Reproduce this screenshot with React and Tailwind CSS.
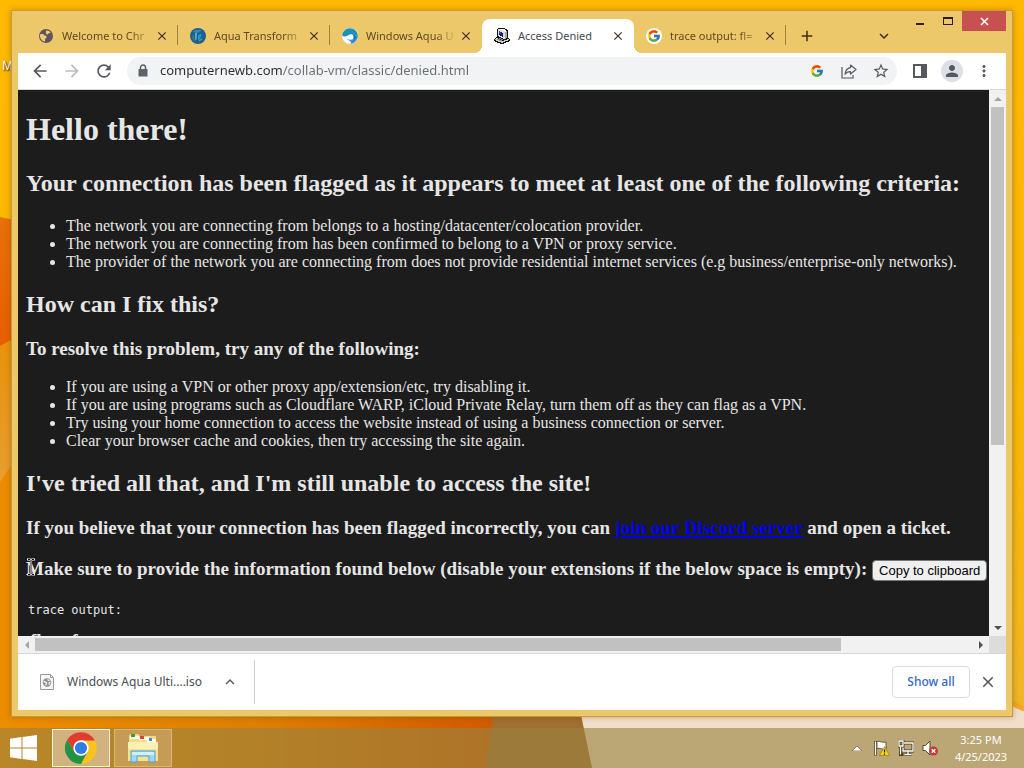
import {
  MdArrowBack,
  MdArrowForward,
  MdRefresh,
  MdStarBorder,
  MdPerson,
  MdMoreVert,
  MdClose,
  MdAdd,
  MdExpandMore,
  MdExpandLess,
} from "react-icons/md";
import { FcGoogle } from "react-icons/fc";

const CRITERIA = [
  "The network you are connecting from belongs to a hosting/datacenter/colocation provider.",
  "The network you are connecting from has been confirmed to belong to a VPN or proxy service.",
  "The provider of the network you are connecting from does not provide residential internet services (e.g business/enterprise-only networks).",
];

const FIXES = [
  "If you are using a VPN or other proxy app/extension/etc, try disabling it.",
  "If you are using programs such as Cloudflare WARP, iCloud Private Relay, turn them off as they can flag as a VPN.",
  "Try using your home connection to access the website instead of using a business connection or server.",
  "Clear your browser cache and cookies, then try accessing the site again.",
];

const TABS = [
  { title: "Welcome to Chr", Icon: GlobeIcon },
  { title: "Aqua Transform", Icon: AquaIcon },
  { title: "Windows Aqua U", Icon: WaveIcon },
  { title: "Access Denied", Icon: ComputerIcon, active: true },
  { title: "trace output: fl=", Icon: GoogleTabIcon },
];

function GlobeIcon() {
  return (
    <svg viewBox="0 0 16 16" className="size-4">
      <circle cx="8" cy="8" r="7" fill="#5f5560" />
      <path d="M2 6.500c2-.8 3.600-.5 4.500 1 1.500 0 2.500.8 2 2-.5 1-1.500 1-1.500 2.200 0 .9.400 1.500-.3 1.800C3.800 13 1.600 10 2 6.500z" fill="#f0cb76" />
      <path d="M8.300 2.500c1.700-.2 3.300.6 4.300 2-.8.800-1.700.3-2.300 1.200-.4.800-1.500 1-2 .3-.5-.9-.6-2.600 0-3.500z" fill="#f0cb76" />
    </svg>
  );
}

function AquaIcon() {
  return (
    <svg viewBox="0 0 16 16" className="size-4">
      <circle cx="8" cy="8" r="8" fill="#1c5f93" />
      <path d="M3 4c2-2.500 6-3 9-1.500-2 .5-3 1-4 2.500z" fill="#3b86b4" />
      <path d="M5 5l2-.5L6.500 12l-1.500-.5z" fill="#57b3b4" />
      <path d="M8 7.500l3-2 .5 1.500-1.500 4-2 1.500z" fill="#2796d6" />
      <path d="M3 6l1.500 5L6 14C3 13 1.500 9.500 3 6z" fill="#3b7f73" />
      <path d="M9 13l3-2" stroke="#8fb75a" strokeWidth="1" />
    </svg>
  );
}

function WaveIcon() {
  return (
    <svg viewBox="0 0 16 16" className="size-4">
      <circle cx="8" cy="8" r="8" fill="#f7fbfd" />
      <path d="M.2 7C.8 3 4 .2 8 .2c4.300 0 7.800 3.500 7.800 7.800 0 1-.2 2-.6 2.800-.7-2.600-2.500-4.600-5.400-4.600C6.500 6.200 5 8.600 2.600 8.600 1.500 8.600.6 8 .2 7z" fill="#1693b8" />
      <path d="M5 10.500c1.500 1.600 4.500 1.700 6.500.6 1-.6 2.700-.7 3.700-.3-1.200 3-3.900 5-7.200 5 1.500-.5 1.500-1.500.5-2.500S5.200 12 5 10.500z" fill="#2f8be6" />
      <path d="M9.800 6.200c2.900 0 4.700 2 5.400 4.600-1.800-.6-2.400.6-4.200.3 1-1.500.7-3.700-1.200-4.900z" fill="#1f6fae" />
    </svg>
  );
}

function ComputerIcon() {
  return (
    <svg viewBox="0 0 16 16" className="size-4" shapeRendering="crispEdges">
      <path d="M4 0h6l4 2v8l2 1v2l-7 3H7l-7-3v-2l3-2V1z" fill="#151515" />
      <path d="M4 1h1l6 3v7h-1L4 8z" fill="#dcdcdc" />
      <path d="M5 1h5l3 2-2 1z" fill="#f4f4f4" />
      <path d="M11 4l2-1v7l-2 1z" fill="#a5a5a5" />
      <path d="M5 3l4 2v4L5 7z" fill="#14147a" />
      <path d="M5 3l2 1v2L5 5z" fill="#3d4fc4" />
      <path d="M1 11l2-1 6 3 5-2 1 1-7 3-7-3z" fill="#d2d2d2" />
      <path d="M3 11l5 2M5 10l4 2" stroke="#8a8a8a" fill="none" />
    </svg>
  );
}

function GoogleTabIcon() {
  return (
    <span className="flex size-4 items-center justify-center rounded-full bg-white">
      <FcGoogle className="size-3.5" />
    </span>
  );
}

function Tab({ title, Icon, active }) {
  return (
    <div
      className={
        active
          ? "flex h-[34px] w-[152px] items-center rounded-t-lg bg-white pr-2 pl-3 text-[#45494d]"
          : "flex h-[34px] w-[152px] items-center pr-2 pl-3 text-[#5e4a22]"
      }
    >
      <Icon />
      <span
        className={
          active
            ? "ml-2 flex-1 text-[11px] whitespace-nowrap"
            : "ml-2 flex-1 text-[11px] whitespace-nowrap [mask-image:linear-gradient(to_right,black_75%,transparent)]"
        }
      >
        {title}
      </span>
      <button type="button" aria-label={"Close " + title} className="flex size-4 items-center justify-center">
        <MdClose className="size-3.5 text-[#3c2c16]" />
      </button>
    </div>
  );
}

function TabStrip() {
  return (
    <div className="flex h-[42px] items-end">
      <div className="flex pl-2">
        {TABS.map((tab, i) => (
          <div key={tab.title} className="relative">
            <Tab {...tab} />
            {i !== 2 && i !== 3 && <span className="absolute top-1.5 right-0 h-5 w-px bg-[#a3823f]" />}
            {tab.active && (
              <>
                <span className="absolute bottom-0 -left-2 size-2 bg-[radial-gradient(circle_at_0_0,transparent_8px,white_8px)]" />
                <span className="absolute -right-2 bottom-0 size-2 bg-[radial-gradient(circle_at_100%_0,transparent_8px,white_8px)]" />
              </>
            )}
          </div>
        ))}
      </div>
      <button type="button" aria-label="New tab" className="flex h-[34px] w-[42px] items-center justify-center">
        <MdAdd className="size-[18px] text-[#3c2c16]" />
      </button>
      <button type="button" aria-label="Search tabs" className="ml-auto flex h-[34px] w-7 items-center justify-center">
        <MdExpandMore className="size-[18px] text-[#3c2c16]" />
      </button>
      <div className="ml-2 flex h-5 self-start">
        <button type="button" aria-label="Minimize" className="flex w-7 items-center justify-center">
          <span className="mt-1.5 h-0.5 w-2 bg-[#2b1c0c]" />
        </button>
        <button type="button" aria-label="Maximize" className="flex w-7 items-center justify-center">
          <span className="h-2 w-2.5 border border-t-2 border-[#2b1c0c]" />
        </button>
        <button type="button" aria-label="Close" className="flex w-11 items-center justify-center bg-[#c75050]">
          <svg viewBox="0 0 9 9" className="size-[9px]">
            <path d="M1 1l7 7M8 1L1 8" stroke="white" strokeWidth="1.600" />
          </svg>
        </button>
      </div>
    </div>
  );
}

function IconButton({ label, children }) {
  return (
    <button type="button" aria-label={label} className="flex h-7 w-8 shrink-0 items-center justify-center text-[#55585c]">
      {children}
    </button>
  );
}

function Toolbar() {
  return (
    <div className="flex h-[37px] items-center border-b border-[#d5d7da] bg-white px-1.5">
      <IconButton label="Back">
        <MdArrowBack className="size-5" />
      </IconButton>
      <IconButton label="Forward">
        <MdArrowForward className="size-5 text-[#bbbdbf]" />
      </IconButton>
      <IconButton label="Reload">
        <MdRefresh className="size-5" />
      </IconButton>
      <div className="mx-[7px] flex h-7 flex-1 items-center rounded-full bg-[#f1f3f4] pl-2.5">
        <label htmlFor="address" aria-label="Address" className="shrink-0">
          <svg viewBox="0 0 12 14" className="h-3.5 w-3 text-[#5f6368]">
            <path d="M1.500 5h9v7.500h-9z" fill="currentColor" />
            <path d="M3.500 6V3.500a2.500 2.500 0 0 1 5 0V6" fill="none" stroke="currentColor" strokeWidth="1.500" />
          </svg>
        </label>
        <input
          id="address"
          type="text"
          defaultValue="computernewb.com/collab-vm/classic/denied.html"
          className="ml-[11px] min-w-0 flex-1 bg-[linear-gradient(to_right,#2a2d31_123px,#6b6f74_123px)] bg-clip-text text-[13px] text-transparent outline-none"
        />
        <IconButton label="Search with Google">
          <FcGoogle className="size-3.5" />
        </IconButton>
        <IconButton label="Share">
          <svg viewBox="0 0 16 16" className="size-4" fill="none" stroke="currentColor" strokeWidth="1.200">
            <path d="M1 4v11h11v-3" />
            <path d="M9.500 2l5.500 4.500-5.500 4.500V8.600c-2.500 0-4.300.8-5.500 2.600.3-3.200 2-6 5.500-6.600z" strokeLinejoin="round" />
          </svg>
        </IconButton>
        <IconButton label="Bookmark">
          <MdStarBorder className="size-[18px]" />
        </IconButton>
      </div>
      <IconButton label="Side panel">
        <svg viewBox="0 0 14 14" className="size-3.5">
          <path d="M0 0h14v14H0zM2 2v10h6V2z" fill="currentColor" fillRule="evenodd" />
        </svg>
      </IconButton>
      <IconButton label="Profile">
        <span className="flex size-[22px] items-center justify-center rounded-full bg-[#dcdfe5]">
          <MdPerson className="size-[18px]" />
        </span>
      </IconButton>
      <IconButton label="Menu">
        <MdMoreVert className="size-[18px]" />
      </IconButton>
    </div>
  );
}

function ScrollArrow({ d, className }) {
  return (
    <span className="flex size-[17px] shrink-0 items-center justify-center">
      <svg viewBox="0 0 8 8" className={"size-2 " + className}>
        <path d={d} fill="currentColor" />
      </svg>
    </span>
  );
}

function Page() {
  return (
    <div className="min-w-0 flex-1 overflow-hidden bg-[#1c1c1c] px-2 font-['Liberation_Serif',serif] text-base leading-[18px] whitespace-nowrap text-[#e6e6e6]">
      <h1 className="mt-[21px] text-[32px] leading-[37px] font-bold">Hello there!</h1>
      <h2 className="mt-[22px] text-2xl leading-[27px] font-bold">
        Your connection has been flagged as it appears to meet at least one of the following criteria:
      </h2>
      <ul className="mt-5 list-disc pl-10">
        {CRITERIA.map((text) => (
          <li key={text}>{text}</li>
        ))}
      </ul>
      <h2 className="mt-5 text-2xl leading-[27px] font-bold">How can I fix this?</h2>
      <h3 className="mt-5 text-[19px] leading-[21px] font-bold">To resolve this problem, try any of the following:</h3>
      <ul className="mt-[19px] list-disc pl-10">
        {FIXES.map((text) => (
          <li key={text}>{text}</li>
        ))}
      </ul>
      <h2 className="mt-5 text-2xl leading-[27px] font-bold">I've tried all that, and I'm still unable to access the site!</h2>
      <h3 className="mt-5 text-[19px] leading-[21px] font-bold">
        If you believe that your connection has been flagged incorrectly, you can{" "}
        <a href="#discord" className="text-[#0000ee] underline decoration-2 underline-offset-2">
          join our Discord server
        </a>{" "}
        and open a ticket.
      </h3>
      <h3 className="relative mt-5 text-[19px] leading-[21px] font-bold">
        Make sure to provide the information found below (disable your extensions if the below space is empty):{" "}
        <button
          type="button"
          className="h-[21px] rounded-sm border border-[#767676] bg-[#efefef] px-1.5 align-middle font-['Liberation_Sans',sans-serif] text-[13px] leading-[18px] font-normal text-black"
        >
          Copy to clipboard
        </button>
        <svg viewBox="0 0 8 18" className="absolute top-0 left-px h-[18px] w-2" fill="none">
          <path d="M0 1.500h3l1 1 1-1h3M4 2.500v13M0 16.500h3l1-1 1 1h3" stroke="#fff" strokeWidth="2" />
          <path d="M1 1.500h2l1 1 1-1h2M4 2.500v13M1 16.500h2l1-1 1 1h2" stroke="#111" />
        </svg>
      </h3>
      <pre className="mt-[19px] pl-0.5 font-['DejaVu_Sans_Mono',monospace] text-xs leading-5">trace output:</pre>
      <h3 className="mt-2.5 pl-1 text-[19px] leading-[21px] font-bold">fl=aaf</h3>
    </div>
  );
}

function DownloadBar() {
  return (
    <div className="flex h-14 items-center bg-white pr-2 pl-[22px]">
      <svg viewBox="0 0 14 16" className="h-4 w-3.5">
        <path d="M.5.500h10l3 3v12H.5z" fill="#f6f6f6" stroke="#9a9a9a" />
        <path d="M10.500.500v3h3" fill="none" stroke="#9a9a9a" />
        <circle cx="7" cy="8.500" r="4.200" fill="#8d8d8d" />
        <path d="M3.600 7.500c1.400-.2 2 .8 2.900 1.200.3 1-.6 1.400-.8 2.600M8 5.200c-.3 1 .6 1.400 1.600 1.200M10.600 8.500c-1.500-.3-2 .7-1.200 2.200" stroke="#f6f6f6" strokeWidth="1.300" fill="none" />
      </svg>
      <span className="ml-[13px] text-xs text-[#4a4d51]">Windows Aqua Ulti....iso</span>
      <button type="button" aria-label="Download options" className="ml-[18px] flex size-5 items-center justify-center">
        <MdExpandLess className="size-[18px] text-[#55585c]" />
      </button>
      <span className="ml-3.5 h-11 w-px bg-[#d0d0d0]" />
      <button
        type="button"
        className="ml-auto h-8 w-[78px] rounded border border-[#dadce0] text-xs font-medium text-[#2f68c9]"
      >
        Show all
      </button>
      <button type="button" aria-label="Close downloads" className="ml-2 flex size-5 items-center justify-center">
        <MdClose className="size-[18px] text-[#4f5256]" />
      </button>
    </div>
  );
}

function BrowserWindow() {
  return (
    <div className="relative flex min-h-0 flex-1 flex-col border border-[#c39a3c] bg-[#edc86b] px-1.5 pb-1.5 shadow-[0_0_6px_rgba(120,70,0,0.4)]">
      <TabStrip />
      <Toolbar />
      <div className="flex min-h-0 flex-1">
        <Page />
        <div className="flex w-[17px] flex-col bg-[#f1f1f1]">
          <ScrollArrow d="M0 6l4-4 4 4z" className="text-[#a3a3a3]" />
          <div className="flex-1 px-0.5">
            <div className="h-[66%] bg-[#c1c1c1]" />
          </div>
          <ScrollArrow d="M0 2l4 4 4-4z" className="text-[#505050]" />
        </div>
      </div>
      <div className="flex h-[18px] border-b border-[#d6d6d6] bg-[#f1f1f1]">
        <ScrollArrow d="M6 0L2 4l4 4z" className="text-[#a3a3a3]" />
        <div className="flex-1 py-0.5">
          <div className="h-full w-[86%] bg-[#c1c1c1]" />
        </div>
        <ScrollArrow d="M2 0l4 4-4 4z" className="text-[#505050]" />
        <span className="w-[17px] bg-[#dcdcdc]" />
      </div>
      <DownloadBar />
    </div>
  );
}

function ChromeLogo() {
  return (
    <svg viewBox="0 0 32 32" className="size-8">
      <path d="M16 8.500h13.900A16 16 0 0 1 16 32l6.500-12.250z" fill="#fcc31e" />
      <path d="M9.500 19.750L2.140 8A16 16 0 0 1 29.900 8.500H16z" fill="#e33b2e" />
      <path d="M2.140 8A16 16 0 0 0 16 32l6.500-12.250H9.500z" fill="#229342" />
      <circle cx="16" cy="16" r="7.700" fill="#fff" />
      <circle cx="16" cy="16" r="6.100" fill="#2f7bea" />
    </svg>
  );
}

function ExplorerIcon() {
  return (
    <svg viewBox="0 0 32 30" className="h-[30px] w-8">
      <path d="M2 3l1-2h8l2 2h16v25H2z" fill="#f2dc82" />
      <path d="M3 3h9v3H3zM12 4h10v3H12zM20 6h9v3h-9z" fill="#fffdf0" />
      <path d="M4 1h4v3H4z" fill="#3c9b3c" />
      <path d="M13 3h4v3h-4z" fill="#d9432f" />
      <path d="M22 5h3v3h-3z" fill="#3d8fd1" />
      <path d="M1 9h30v19H1z" fill="#f5e38a" />
      <path d="M1 9h30v7H1z" fill="#faf0b4" />
      <path d="M4 18h24v11h-6v-6H10v6H4z" fill="#9fd6f5" stroke="#4aa3d8" />
      <path d="M5 19h22v3H5z" fill="#d3effc" />
    </svg>
  );
}

function Taskbar() {
  return (
    <div className="relative flex h-10 items-center bg-[#998240]/62 text-white">
      <button type="button" aria-label="Start" className="flex h-10 w-[52px] items-center pl-2.5">
        <svg viewBox="0 0 27 26" className="h-[26px] w-[27px]" fill="#fff">
          <path d="M0 3.700L11.500 2v10.500H0zM12.500 1.900L27 0v12.500H12.500zM0 13.500h11.500V24L0 22.300zM12.500 13.500H27V26l-14.500-2z" />
        </svg>
      </button>
      <button type="button" aria-label="Chrome" className="flex h-[38px] w-[58px] items-center justify-center border border-[#fdf3d8] bg-[#d2b27e]">
        <ChromeLogo />
      </button>
      <button type="button" aria-label="File Explorer" className="ml-1 flex h-[38px] w-[58px] items-center justify-center border border-[#d9b778] bg-[#c59b55]">
        <ExplorerIcon />
      </button>
      <div className="ml-auto flex items-center gap-2">
        <button type="button" aria-label="Show hidden icons">
          <svg viewBox="0 0 10 6" className="h-1.5 w-2.5">
            <path d="M0 6l5-5 5 5z" fill="#fff" stroke="#5d4c2b" strokeWidth=".6" />
          </svg>
        </button>
        <svg viewBox="0 0 16 16" className="ml-1 size-4">
          <path d="M1.500 1v14.500" stroke="#4b3c20" strokeWidth="3" />
          <path d="M3 1.500c3-1 4 1.500 9 .5v7c-4 1-6-1.500-9-.5z" fill="#fff" stroke="#4b3c20" strokeWidth=".8" />
          <path d="M1.500 1.500v13.500" stroke="#fff" strokeWidth="1.400" />
          <path d="M10.500 6.500l5 9h-10z" fill="#f7d51d" stroke="#8a7000" strokeWidth=".6" />
          <path d="M10.500 9.500v3M10.500 13.500v1.200" stroke="#222" strokeWidth="1.200" />
        </svg>
        <svg viewBox="0 0 16 16" className="size-4" fill="none">
          <path d="M6 3h9v8H5V8M10 11v3M6.500 14.500h7M2.500 7v7.500h3M1 1h4v5H1z" stroke="#4b3c20" strokeWidth="3" />
          <path d="M6 3h9v8H5V8M10 11v3M6.500 14.500h7M2.500 7v7.500M1 1h4v5H1z" stroke="#fff" strokeWidth="1.300" />
        </svg>
        <svg viewBox="0 0 16 16" className="size-4">
          <path d="M1 5.500h2.500L8 1v14l-4.500-4.500H1z" fill="#fff" stroke="#4b3c20" strokeWidth=".9" />
          <circle cx="11.500" cy="11" r="4.500" fill="#cf3430" />
          <path d="M9.700 9.200l3.600 3.600M13.300 9.200l-3.600 3.600" stroke="#fff" strokeWidth="1.400" />
        </svg>
        <div className="w-[78px] pr-2 text-center text-[11px] leading-[17px]">
          <div>3:25 PM</div>
          <div>4/25/2023</div>
        </div>
      </div>
    </div>
  );
}

function Wallpaper() {
  return (
    <svg viewBox="0 0 1024 768" preserveAspectRatio="none" className="absolute inset-0 h-full w-full">
      <defs>
        <linearGradient id="sky" x1="0" y1="0" x2="0" y2="1">
          <stop offset="0" stopColor="#ffb900" />
          <stop offset=".5" stopColor="#f9b800" />
          <stop offset="1" stopColor="#f0b42c" />
        </linearGradient>
        <linearGradient id="fold" x1="0" y1="0" x2="0" y2="1">
          <stop offset="0" stopColor="#e8700a" />
          <stop offset="1" stopColor="#e85a00" />
        </linearGradient>
        <linearGradient id="glow" x1="0" y1="0" x2="0" y2="1">
          <stop offset="0" stopColor="#ea9006" />
          <stop offset="1" stopColor="#e6a036" />
        </linearGradient>
        <linearGradient id="floor" x1="0" y1="0" x2="1" y2="0">
          <stop offset="0" stopColor="#ec8c00" />
          <stop offset=".5" stopColor="#dd8000" />
          <stop offset="1" stopColor="#d05a00" />
        </linearGradient>
      </defs>
      <path d="M0 0h1024v768H0z" fill="url(#sky)" />
      <path d="M0 217l40 8v150H0z" fill="url(#fold)" />
      <path d="M0 346l40-22v180H0z" fill="url(#glow)" />
      <path d="M0 482l40-60v280h455v66H0z" fill="url(#floor)" />
      <path d="M495 700h84l14 68H486z" fill="#a06e30" />
      <path d="M578 700h430q8 8 16 11v57H592z" fill="#f2dfcb" />
      <path d="M1008 700q8 6 16 9" fill="none" stroke="#f3a526" strokeWidth="5" />
    </svg>
  );
}

export default function App() {
  return (
    <div className="relative flex h-screen flex-col overflow-hidden font-['Noto_Sans',sans-serif]">
      <Wallpaper />
      <span className="absolute top-[58px] left-0.5 text-xs text-white [text-shadow:1px_1px_2px_black]">M</span>
      <div className="flex min-h-0 flex-1 flex-col px-[11px] pt-2.5 pb-[11px]">
        <BrowserWindow />
      </div>
      <Taskbar />
    </div>
  );
}
